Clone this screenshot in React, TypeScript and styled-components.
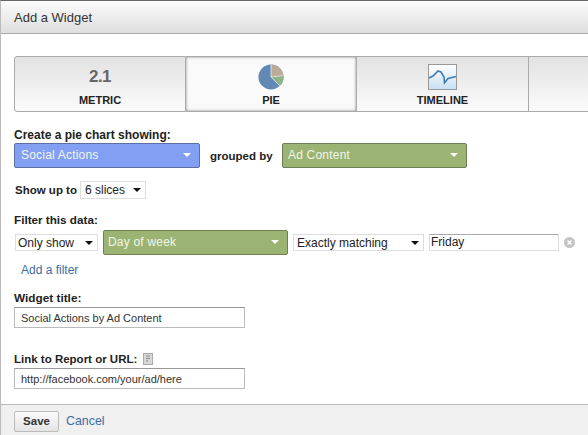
import styled, { createGlobalStyle } from 'styled-components';

const GlobalStyle = createGlobalStyle`
  html, body {
    margin: 0;
    padding: 0;
    background: #fff;
    overflow: hidden;
  }
  * {
    box-sizing: border-box;
  }
`;

const tabs = [
  { label: 'METRIC', icon: <MetricIcon /> },
  { label: 'PIE', icon: <PieIcon />, active: true },
  { label: 'TIMELINE', icon: <TimelineIcon /> },
];

function MetricIcon() {
  return <MetricValue>2.1</MetricValue>;
}

function PieIcon() {
  return (
    <svg width="26" height="26" viewBox="0 0 28 28">
      <circle cx="14" cy="14" r="13.5" fill="#6288b6" />
      <path d="M14 14 V0.5 A13.5 13.5 0 0 1 27.4 12.5 Z" fill="#bdab98" />
      <path d="M14 14 L27.4 12.5 A13.5 13.5 0 0 1 23.5 23.5 Z" fill="#8fb387" />
      <path d="M14 14 V0.5 M14 14 L27.4 12.5 M14 14 L23.5 23.5" stroke="#fff" strokeWidth="0.7" fill="none" />
    </svg>
  );
}

function TimelineIcon() {
  return (
    <svg width="29" height="26" viewBox="0 0 29 26">
      <defs>
        <linearGradient id="tl" x1="0" y1="0" x2="0" y2="1">
          <stop offset="0" stopColor="#ffffff" />
          <stop offset="1" stopColor="#c9e0f2" />
        </linearGradient>
      </defs>
      <rect x="0.5" y="0.5" width="28" height="25" fill="url(#tl)" stroke="#999" />
      <path d="M1 14 L5 12 L10 7 L13 8 L16 13 L16.500 19 L20 14.500 L28 12.500" fill="none" stroke="#3f7fb5" strokeWidth="1.6" />
    </svg>
  );
}

function Caret({ light }: { light?: boolean }) {
  return (
    <CaretMark width="8" height="4" viewBox="0 0 8 4">
      <path d="M0 0 H8 L4 4 Z" fill={light ? '#fff' : '#111'} />
    </CaretMark>
  );
}

export default function App() {
  return (
    <Page>
      <GlobalStyle />
      <Header>Add a Widget</Header>
      <Body>
        <TabBar>
          {tabs.map((t) => (
            <Tab key={t.label} $active={t.active}>
              <TabIcon>{t.icon}</TabIcon>
              <TabLabel>{t.label}</TabLabel>
            </Tab>
          ))}
          <Tab />
        </TabBar>

        <Label>Create a pie chart showing:</Label>
        <DimensionRow>
          <ColorSelect $tone="blue" $width={186} $inset={6}>
            Social Actions
            <Caret light />
          </ColorSelect>
          <GroupedBy>grouped by</GroupedBy>
          <ColorSelect $tone="green" $width={185} $inset={5}>
            Ad Content
            <Caret light />
          </ColorSelect>
        </DimensionRow>

        <SlicesRow>
          <SlicesLabel>Show up to</SlicesLabel>
          <NativeLike $width={66} $height={18} $inset={4}>
            6 slices
            <Caret />
          </NativeLike>
        </SlicesRow>

        <FilterLabel>Filter this data:</FilterLabel>
        <FilterRow>
          <NativeLike $width={83} $height={17} $inset={2}>
            Only show
            <Caret />
          </NativeLike>
          <ColorSelect $tone="green" $width={185} $inset={4}>
            Day of week
            <Caret light />
          </ColorSelect>
          <NativeLike $width={131} $height={17} $inset={3}>
            Exactly matching
            <Caret />
          </NativeLike>
          <FilterInput>Friday</FilterInput>
          <ClearIcon width="11" height="11" viewBox="0 0 11 11">
            <circle cx="5.5" cy="5.5" r="5.5" fill="#c4c4c4" />
            <path d="M3.500 3.500 L7.500 7.500 M7.500 3.500 L3.500 7.500" stroke="#fff" strokeWidth="1.4" />
          </ClearIcon>
        </FilterRow>
        <AddFilter>Add a filter</AddFilter>

        <TitleLabel>Widget title:</TitleLabel>
        <TextField>Social Actions by Ad Content</TextField>

        <LinkLabel>
          Link to Report or URL:
          <NoteIcon width="10" height="12" viewBox="0 0 10 12">
            <rect x="0.5" y="0.5" width="9" height="11" fill="#d8d8d8" stroke="#aaa" />
            <path d="M3 3 H7 M3 5.500 H7 M3 8 H5" stroke="#888" />
          </NoteIcon>
        </LinkLabel>
        <TextField>http://facebook.com/your/ad/here</TextField>
      </Body>
      <Footer>
        <SaveButton>Save</SaveButton>
        <CancelLink>Cancel</CancelLink>
      </Footer>
    </Page>
  );
}

const Page = styled.div`
  width: 588px;
  height: 435px;
  display: flex;
  flex-direction: column;
  overflow: hidden;
  background: #fff;
  border-top: 1px solid #666;
  border-left: 1px solid #bbb;
  font-family: 'Liberation Sans', Arial, sans-serif;
  font-size: 12px;
  color: #222;
`;

const Header = styled.div`
  height: 33px;
  flex: none;
  padding: 0 13px;
  display: flex;
  align-items: center;
  font-size: 13px;
  color: #333;
  background: linear-gradient(#fcfcfc, #dedede);
  border-bottom: 1px solid #aaa;
`;

const Body = styled.div`
  flex: 1;
  padding: 22px 0 0 13px;
  display: flex;
  flex-direction: column;
  align-items: flex-start;
`;

const TabBar = styled.div`
  display: flex;
  width: 600px;
  height: 56px;
  flex: none;
`;

const Tab = styled.div<{ $active?: boolean }>`
  width: 171px;
  height: 56px;
  flex: none;
  display: flex;
  flex-direction: column;
  align-items: center;
  background: ${(p) => (p.$active ? '#fafafa' : 'linear-gradient(#e2e2e2, #fbfbfb)')};
  border: 1px solid #aaa;
  border-left: none;
  box-shadow: ${(p) => (p.$active ? 'inset 0 0 3px #888' : 'none')};

  &:first-child {
    border-left: 1px solid #aaa;
    border-radius: 3px 0 0 3px;
    width: 172px;
  }
  &:nth-child(3) {
    width: 172px;
  }
  &:last-child {
    width: 120px;
  }
`;

const TabIcon = styled.div`
  height: 36px;
  display: flex;
  align-items: center;
  justify-content: center;
  padding-top: 4px;
`;

const TabLabel = styled.div`
  font-size: 11px;
  font-weight: bold;
  color: #222;
  line-height: 13px;
  margin-top: 1px;
`;

const MetricValue = styled.span`
  font-size: 17px;
  font-weight: bold;
  color: #666;
  letter-spacing: -0.5px;
`;

const Label = styled.div`
  font-weight: bold;
  line-height: 14px;
  margin-top: 16px;
`;

const DimensionRow = styled.div`
  display: flex;
  align-items: center;
  margin-top: 1px;
`;

const ColorSelect = styled.div<{ $tone: 'blue' | 'green'; $width: number; $inset: number }>`
  width: ${(p) => p.$width}px;
  height: 25px;
  flex: none;
  display: flex;
  align-items: center;
  justify-content: space-between;
  padding: 0 8px 1px ${(p) => p.$inset}px;
  font-size: 12px;
  letter-spacing: 0.2px;
  color: #f2f5ea;
  border-radius: 2px;
  background: ${(p) => (p.$tone === 'blue' ? '#829ff4' : '#9bb474')};
  border: 1px solid ${(p) => (p.$tone === 'blue' ? '#5c6f9f' : '#6e7f55')};
`;

const CaretMark = styled.svg`
  flex: none;
`;

const GroupedBy = styled.div`
  font-weight: bold;
  font-size: 11.5px;
  width: 82px;
  padding-left: 10px;
`;

const SlicesRow = styled.div`
  display: flex;
  align-items: center;
  margin: 13px 0 0 1px;
`;

const SlicesLabel = styled.div`
  font-weight: bold;
  font-size: 11.5px;
  width: 65px;
`;

const NativeLike = styled.div<{ $width: number; $height: number; $inset: number }>`
  width: ${(p) => p.$width}px;
  height: ${(p) => p.$height}px;
  flex: none;
  display: flex;
  align-items: center;
  justify-content: space-between;
  padding: 0 4px 0 ${(p) => p.$inset}px;
  font-size: 12px;
  color: #222;
  background: #fff;
  border: 1px solid #ddd;
`;

const FilterLabel = styled.div`
  font-weight: bold;
  font-size: 11.7px;
  line-height: 14px;
  margin-top: 14px;
`;

const FilterRow = styled.div`
  display: flex;
  align-items: center;
  gap: 5px;
  margin: 3px 0 0 1px;
`;

const FilterInput = styled.div`
  width: 130px;
  height: 17px;
  flex: none;
  padding: 0 1px;
  line-height: 14px;
  font-size: 12px;
  background: #fff;
  border: 1px solid #ddd;
  border-top-color: #aaa;
`;

const ClearIcon = styled.svg`
  flex: none;
`;

const AddFilter = styled.a`
  margin: 8px 0 0 7px;
  line-height: 14px;
  color: #3a6ea5;
`;

const TitleLabel = styled.div`
  font-weight: bold;
  font-size: 11.8px;
  line-height: 14px;
  margin-top: 14px;
`;

const TextField = styled.div`
  width: 231px;
  height: 21px;
  flex: none;
  margin-top: 2px;
  padding: 0 6px;
  display: flex;
  align-items: center;
  font-size: 11px;
  color: #333;
  background: #fff;
  border: 1px solid #bbb;
  border-top-color: #999;
`;

const LinkLabel = styled.div`
  font-weight: bold;
  font-size: 11.5px;
  line-height: 14px;
  margin-top: 24px;
  display: flex;
  align-items: center;
  gap: 6px;
`;

const NoteIcon = styled.svg`
  flex: none;
`;

const Footer = styled.div`
  height: 31px;
  flex: none;
  display: flex;
  align-items: center;
  gap: 7px;
  padding: 2px 0 0 13px;
  background: #f0f0f0;
  border-top: 1px solid #bbb;
`;

const SaveButton = styled.div`
  width: 45px;
  height: 21px;
  display: flex;
  align-items: center;
  justify-content: center;
  font-weight: bold;
  font-size: 11.5px;
  color: #333;
  border: 1px solid #bbb;
  border-radius: 2px;
  background: linear-gradient(#fafafa, #e4e4e4);
`;

const CancelLink = styled.a`
  color: #3a6ea5;
  font-size: 12.4px;
`;
